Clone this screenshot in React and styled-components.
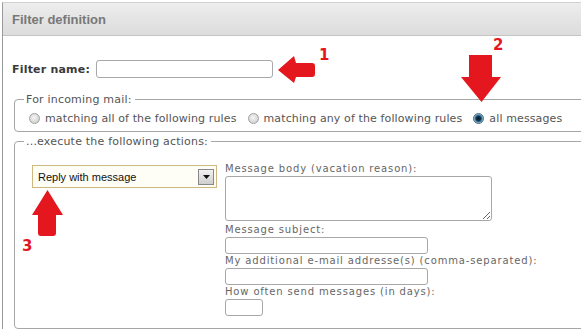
import React from 'react';
import styled, { createGlobalStyle } from 'styled-components';

const GlobalStyle = createGlobalStyle`
	html, body {
		margin: 0;
		padding: 0;
		background: #fff;
		overflow: hidden;
	}
	body {
		font-family: 'DejaVu Sans', Verdana, sans-serif;
	}
`;

const RED = '#e4171f';

const Page = () => {
	return (
		<Stage>
			<GlobalStyle />
			<Panel>
				<Header>Filter definition</Header>
				<Body>
					<NameRow>
						<NameLabel>Filter name:</NameLabel>
						<TextInput width={177} />
					</NameRow>

					<Group>
						<Legend>For incoming mail:</Legend>
						<RadioRow>
							<RadioLabel>
								<Radio type='radio' name='scope' />
								matching all of the following rules
							</RadioLabel>
							<RadioLabel>
								<Radio type='radio' name='scope' />
								matching any of the following rules
							</RadioLabel>
							<RadioLabel>
								<Radio type='radio' name='scope' defaultChecked />
								all messages
							</RadioLabel>
						</RadioRow>
					</Group>

					<Group actions>
						<Legend>...execute the following actions:</Legend>
						<Actions>
							<Select>
								<span>Reply with message</span>
								<SelectButton>
									<svg width='7' height='4' viewBox='0 0 7 4'>
										<path d='M0 0h7L3.5 4z' fill='#111' />
									</svg>
								</SelectButton>
							</Select>
							<Fields>
								<FieldLabel>Message body (vacation reason):</FieldLabel>
								<TextArea />
								<FieldLabel gap>Message subject:</FieldLabel>
								<TextInput width={203} small />
								<FieldLabel>My additional e-mail addresse(s) (comma-separated):</FieldLabel>
								<TextInput width={203} small />
								<FieldLabel>How often send messages (in days):</FieldLabel>
								<TextInput width={38} small />
							</Fields>
						</Actions>
					</Group>
				</Body>
			</Panel>

			{/* red annotation arrows drawn over the screenshot */}
			<Mark x={277} y={55}>
				<svg width='40' height='28' viewBox='0 0 40 28'>
					<path
						d='M1 15 L17 1 L19 8 L35 8 Q38 8 38 11 L38 19 Q38 22 35 22 L19 22 L17 28 Z'
						fill={RED}
					/>
				</svg>
			</Mark>
			<Number x={319} y={46}>1</Number>

			<Mark x={461} y={55}>
				<svg width='41' height='48' viewBox='0 0 41 48'>
					<path d='M8 0 L31 0 L31 22 L40 22 L20.5 47 L0 22 L8 22 Z' fill={RED} />
				</svg>
			</Mark>
			<Number x={493} y={36}>2</Number>

			<Mark x={32} y={190}>
				<svg width='32' height='47' viewBox='0 0 32 47'>
					<path
						d='M15.5 0 L31 25 L24 25 L24 43 Q24 46 21 46 L9 46 Q6 46 6 43 L6 25 L0 25 Z'
						fill={RED}
					/>
				</svg>
			</Mark>
			<Number x={22} y={237}>3</Number>
		</Stage>
	);
};

export default function App() {
	return <Page />;
}

const Stage = styled.div`
	position: relative;
	width: 581px;
	height: 329px;
	overflow: hidden;
	padding: 2px 0 0 2px;
	box-sizing: border-box;
`;

const Panel = styled.div`
	width: 640px;
	height: 340px;
	border-left: 1px solid #9a9a9a;
	border-top: 1px solid #d0d0d0;
	box-sizing: border-box;
`;

const Header = styled.div`
	height: 33px;
	line-height: 34px;
	padding-left: 9px;
	background: linear-gradient(#ededed, #dcdcdc);
	border-bottom: 1px solid #c4c4c4;
	color: #787878;
	font-family: 'Liberation Sans', Arial, sans-serif;
	font-weight: bold;
	font-size: 13px;
	box-sizing: border-box;
`;

const Body = styled.div`
	padding: 24px 0 0 9px;
`;

const NameRow = styled.div`
	display: flex;
	align-items: center;
	gap: 6px;
	height: 18px;
`;

const NameLabel = styled.label`
	font-weight: bold;
	font-size: 11px;
	letter-spacing: 0.2px;
	color: #3a3a3a;
`;

const TextInput = styled.input`
	width: ${(p) => p.width}px;
	height: ${(p) => (p.small ? 17 : 18)}px;
	box-sizing: border-box;
	border: 1px solid #a8a8a8;
	border-radius: 3px;
	background: #fff;
	margin: 0;
	padding: 0 3px;
	outline: none;
`;

const Group = styled.fieldset`
	margin: ${(p) => (p.actions ? '3px' : '15px')} 0 0 2px;
	padding: ${(p) => (p.actions ? '14px 0 0 0' : '6px 0 6px 0')};
	border: 1px solid #a6a6a6;
	border-radius: 4px;
	height: ${(p) => (p.actions ? '194px' : 'auto')};
	box-sizing: border-box;
`;

const Legend = styled.legend`
	padding: 0 3px 0 2px;
	margin-left: 9px;
	font-size: 11px;
	letter-spacing: 0.2px;
	color: #555;
`;

const RadioRow = styled.div`
	display: flex;
	align-items: center;
	gap: 11px;
	padding-left: 14px;
`;

const RadioLabel = styled.label`
	display: flex;
	align-items: center;
	gap: 5px;
	font-size: 11px;
	letter-spacing: 0.12px;
	color: #555;
	white-space: nowrap;
`;

const Radio = styled.input`
	appearance: none;
	width: 11px;
	height: 11px;
	margin: 0;
	border-radius: 50%;
	border: 1px solid #a0a0a0;
	background: radial-gradient(circle at 45% 40%, #f4f4f4, #c8c8c8);
	box-sizing: border-box;
	&:checked {
		border-color: #4a6a80;
		background: radial-gradient(circle at 50% 50%, #0c1c2c 0, #0f2a40 2px, #3d7fa6 3.5px, #cfe3ef 5px);
	}
`;

const Actions = styled.div`
	display: flex;
	align-items: flex-start;
	gap: 8px;
	padding-left: 17px;
`;

const Select = styled.div`
	width: 185px;
	height: 23px;
	box-sizing: border-box;
	border: 1px solid #cdb97d;
	background: #fffef6;
	display: flex;
	align-items: center;
	justify-content: space-between;
	padding: 0 2px 0 5px;
	font-family: 'Liberation Sans', Arial, sans-serif;
	font-size: 11px;
	color: #111;
	margin-top: 3px;
`;

const SelectButton = styled.span`
	width: 16px;
	height: 16px;
	box-sizing: border-box;
	border: 1px solid #888;
	background: linear-gradient(#f2f2f2, #cfcfcf);
	display: flex;
	align-items: center;
	justify-content: center;
`;

const Fields = styled.div`
	display: flex;
	flex-direction: column;
	align-items: flex-start;
`;

const FieldLabel = styled.label`
	font-size: 10px;
	line-height: 14px;
	color: #666;
	letter-spacing: 0.85px;
	white-space: nowrap;
	margin-top: ${(p) => (p.gap ? 2 : 0)}px;
`;

const TextArea = styled.textarea`
	width: 267px;
	height: 45px;
	box-sizing: border-box;
	border: 1px solid #a8a8a8;
	border-radius: 3px;
	margin: 0;
	resize: both;
	outline: none;
	display: block;
`;

const Mark = styled.div`
	position: absolute;
	left: ${(p) => p.x}px;
	top: ${(p) => p.y}px;
	line-height: 0;
`;

const Number = styled.div`
	position: absolute;
	left: ${(p) => p.x}px;
	top: ${(p) => p.y}px;
	color: ${RED};
	font-weight: bold;
	font-size: 15px;
	font-family: 'DejaVu Sans', sans-serif;
`;
